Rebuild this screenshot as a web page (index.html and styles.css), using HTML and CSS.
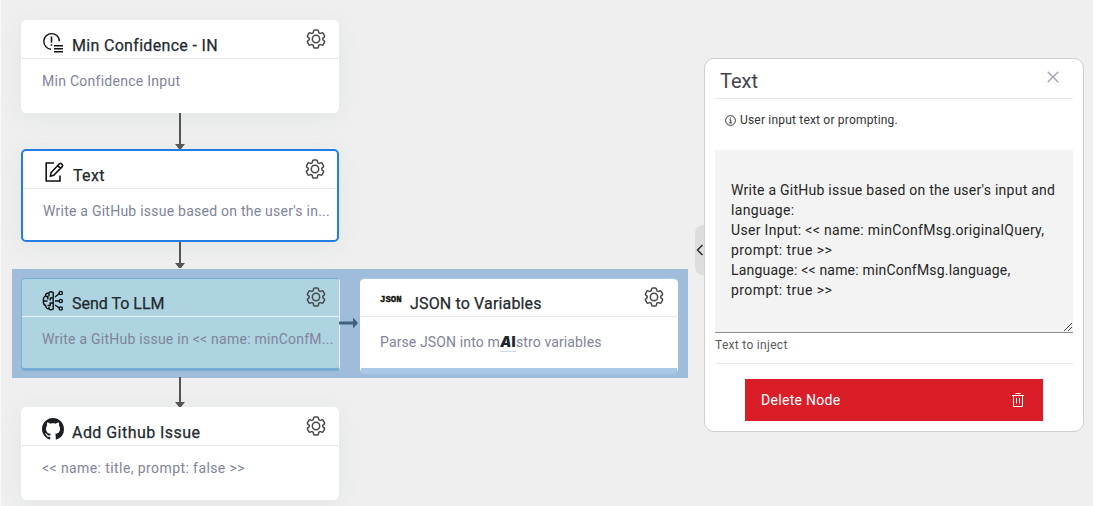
FILE: index.html
```html
<!DOCTYPE html>
<html lang="en">
<head>
<meta charset="utf-8">
<title>Flow editor</title>
<link rel="stylesheet" href="styles.css">
</head>
<body>
<svg class="defs" aria-hidden="true">
  <symbol id="gear" viewBox="0 0 24 24"><g fill="none" stroke="currentColor" stroke-width="1.5" stroke-linejoin="round"><path d="M9.594 3.94c.09-.542.56-.94 1.11-.94h2.593c.55 0 1.02.398 1.11.94l.213 1.281c.063.374.313.686.645.87.074.04.147.083.22.127.325.196.72.257 1.075.124l1.217-.456a1.125 1.125 0 0 1 1.37.49l1.296 2.247a1.125 1.125 0 0 1-.26 1.431l-1.003.827c-.293.241-.438.613-.43.992a7.723 7.723 0 0 1 0 .255c-.008.378.137.75.43.991l1.004.827c.424.35.534.955.26 1.43l-1.298 2.247a1.125 1.125 0 0 1-1.369.491l-1.217-.456c-.355-.133-.75-.072-1.076.124a6.47 6.47 0 0 1-.22.128c-.331.183-.581.495-.644.869l-.213 1.281c-.09.543-.56.94-1.11.94h-2.594c-.55 0-1.019-.398-1.11-.94l-.213-1.281c-.062-.374-.312-.686-.644-.87a6.52 6.52 0 0 1-.22-.127c-.325-.196-.72-.257-1.076-.124l-1.217.456a1.125 1.125 0 0 1-1.369-.49l-1.297-2.247a1.125 1.125 0 0 1 .26-1.431l1.004-.827c.292-.24.437-.613.43-.991a6.932 6.932 0 0 1 0-.255c.007-.38-.138-.751-.43-.992l-1.004-.827a1.125 1.125 0 0 1-.26-1.43l1.297-2.247a1.125 1.125 0 0 1 1.37-.491l1.216.456c.356.133.751.072 1.076-.124.072-.044.146-.086.22-.128.332-.183.582-.495.644-.869l.214-1.28Z"/><circle cx="12" cy="12" r="3.7"/></g></symbol>
</svg>
<main class="canvas">
  <section class="branch"></section>

  <article class="node node-confidence">
    <header class="node-head">
      <svg class="icon" viewBox="0 0 22 22"><g fill="none" stroke="#111" stroke-width="1.4"><path d="M9 17.2A7.8 7.8 0 1 1 17.4 9.2"/><path d="M9.5 4.6v6.2M9.5 12.2v1.5" stroke-width="1.6"/><path d="M12 13.7h9M12 16.7h9M12 19.7h9" stroke-width="1.5"/></g></svg>
      <h2 class="node-title">Min Confidence - IN</h2>
      <svg class="gear"><use href="#gear"/></svg>
    </header>
    <p class="node-text">Min Confidence Input</p>
  </article>

  <article class="node node-selected">
    <header class="node-head">
      <svg class="icon icon-edit" viewBox="0 0 22 22"><g fill="none" stroke="#111" stroke-width="1.6"><path d="M11 2H3.2v18H17V14.5"/><path d="M8 11.8 16.4 2.8q1-1 2 0l.8.8q1 1 0 2L10.7 14.4 7.4 15.2ZM14.7 4.6l2.8 2.8"/></g></svg>
      <h2 class="node-title">Text</h2>
      <svg class="gear"><use href="#gear"/></svg>
    </header>
    <p class="node-text">Write a GitHub issue based on the user's in...</p>
  </article>

  <article class="node node-llm">
    <header class="node-head">
      <svg class="icon" viewBox="0 0 22 22"><g fill="none" stroke="#0b0f12" stroke-width="1.4"><path d="M11.2 2.5Q8 .8 6.8 3 3.500 3 3.400 6 .8 7.500 1.500 10.800.8 14.200 3.500 15.500 4 18.800 7 18.800 8.400 20.700 11.200 19Z"/><path d="M7 3.200v3M3.600 6.500h2.200v3M1.800 11h3.700M11 8H8.300v2.400M11 13H8.200v2.500H5.600M7 18.600v-1.700M13 11h4.200M13 7l4.400-3.500M13 15l4.400 3"/><circle cx="18.800" cy="3" r="1.600"/><circle cx="18.800" cy="11" r="1.600"/><circle cx="18.800" cy="18.500" r="1.600"/></g></svg>
      <h2 class="node-title">Send To LLM</h2>
      <svg class="gear"><use href="#gear"/></svg>
    </header>
    <p class="node-text">Write a GitHub issue in &lt;&lt; name: minConfM...</p>
  </article>

  <article class="node node-json">
    <header class="node-head">
      <span class="json-mark">JSON</span>
      <h2 class="node-title">JSON to Variables</h2>
      <svg class="gear"><use href="#gear"/></svg>
    </header>
    <p class="node-text">Parse JSON into m<b class="ai"><i>A</i>I</b>stro variables</p>
  </article>

  <article class="node node-github">
    <header class="node-head">
      <svg class="icon icon-github" viewBox="0 0 16 16"><path fill="#1b1f23" d="M8 0C3.58 0 0 3.58 0 8c0 3.54 2.29 6.53 5.47 7.59.4.07.55-.17.55-.38 0-.19-.01-.82-.01-1.49-2.01.37-2.53-.49-2.69-.94-.09-.23-.48-.94-.82-1.13-.28-.15-.68-.52-.01-.53.63-.01 1.08.58 1.23.82.72 1.21 1.87.87 2.33.66.07-.52.28-.87.51-1.07-1.78-.2-3.64-.89-3.64-3.95 0-.87.31-1.59.82-2.15-.08-.2-.36-1.02.08-2.12 0 0 .67-.21 2.2.82.64-.18 1.32-.27 2-.27s1.36.09 2 .27c1.53-1.04 2.2-.82 2.2-.82.44 1.1.16 1.92.08 2.12.51.56.82 1.27.82 2.15 0 3.07-1.87 3.75-3.65 3.95.29.25.54.73.54 1.48 0 1.07-.01 1.93-.01 2.2 0 .21.15.46.55.38A8.01 8.01 0 0 0 16 8c0-4.42-3.58-8-8-8Z"/></svg>
      <h2 class="node-title">Add Github Issue</h2>
      <svg class="gear"><use href="#gear"/></svg>
    </header>
    <p class="node-text">&lt;&lt; name: title, prompt: false &gt;&gt;</p>
  </article>

  <svg class="edges" viewBox="0 0 700 506">
    <path fill="#555" d="M179 113h2v31h4l-4 5h-2l-4-5h4ZM179 242h2v21h4l-4 5h-2l-4-5h4ZM179 377h2v25h4l-4 5h-2l-4-5h4Z"/>
    <path fill="#3f607f" d="M339 321.5h14v-4l5 5.500-5 5.500v-4h-14Z"/>
  </svg>

  <button class="collapse" aria-label="Collapse"><svg viewBox="0 0 10 12"><path d="M7.500 1 2.500 6l5 5" fill="none" stroke="#222" stroke-width="1.400"/></svg></button>

  <aside class="panel">
    <header class="panel-head">
      <h1 class="panel-title">Text</h1>
      <svg class="close" viewBox="0 0 12 12"><path d="M.7.7l10.600 10.600M11.300.7.7 11.300" stroke="#a3a5b3" stroke-width="1.400"/></svg>
    </header>
    <p class="hint"><svg class="info" viewBox="0 0 12 12"><g fill="none" stroke="#222"><circle cx="6" cy="6" r="5.300"/><path d="M4.800 5.300h1.500v3M4.500 8.500h3.200M5.500 3.300h1.200"/></g></svg>User input text or prompting.</p>
    <div class="field">
      <p class="line-first">Write a GitHub issue based on the user's input and</p>
      <p>language:</p>
      <p>User Input: &lt;&lt; name: minConfMsg.originalQuery,</p>
      <p class="line-prompt">prompt: true &gt;&gt;</p>
      <p class="line-language">Language: &lt;&lt; name: minConfMsg.language,</p>
      <p class="line-prompt">prompt: true &gt;&gt;</p>
      <svg class="grip" viewBox="0 0 10 10"><path d="M1 9 9 1M5 9 9 5" stroke="#444" stroke-width="1" fill="none"/></svg>
    </div>
    <p class="caption">Text to inject</p>
    <button class="delete">Delete Node
      <svg class="trash" viewBox="0 0 14 16"><path d="M1 3.500h12M4.500 1.500h5M2.500 3.500v11h9v-11M5.500 6v5.500M8.500 6v5.500" fill="none" stroke="#fff" stroke-width="1"/></svg>
    </button>
  </aside>
</main>
</body>
</html>
```
FILE: styles.css
```css
* { box-sizing: border-box; margin: 0; padding: 0; }
body { background: #efefef; font-family: Roboto, "Liberation Sans", sans-serif; overflow: hidden; }
.defs { position: absolute; width: 0; height: 0; }
.canvas { position: relative; width: 1093px; height: 506px; overflow: hidden; border-left: 1px solid #fafafa; }
.branch { position: absolute; left: 11px; top: 269px; width: 676px; height: 109px; background: #9fbdda; }
.node {
  position: absolute; left: 20px; width: 318px; height: 93px;
  display: flex; flex-direction: column;
  background: #fff; border: 1px solid #fff; border-radius: 5px;
  box-shadow: 0 4px 20px rgba(200, 210, 210, .32);
}
.node-confidence { top: 20px; }
.node-selected { top: 149px; border: 2px solid #247de1; }
.node-llm { top: 278px; width: 319px; background: #add4e0; border-color: #76acd3 #e8eef3 #76acd3 #79afd3; border-bottom-width: 3px; border-radius: 4px; box-shadow: none; }
.node-json { left: 359px; top: 278px; height: 96px; border-color: #a9cae7 #fff; border-bottom-width: 6px; box-shadow: none; }
.node-github { top: 407px; }
.node-head { display: flex; flex: none; height: 38px; padding: 0 12px 0 20px; border-bottom: 1px solid #e6e7ee; }
.node-llm .node-head { border-color: #e9f2f6; padding-right: 13px; }
.icon { flex: none; width: 22px; height: 22px; margin-top: 11px; }
.node-selected .icon { margin-top: 10px; }
.icon-github { margin-top: 10px; }
.node-title { flex: 1; margin: 14px 0 0 8px; font-size: 16px; line-height: 22px; font-weight: 400; -webkit-text-stroke: .25px #24292e; letter-spacing: .32px; color: #24292e; white-space: nowrap; }
.node-llm .node-title { letter-spacing: 0; }
.node-json .node-title { margin-left: 8px; letter-spacing: .15px; }
.node-github .node-title { letter-spacing: .45px; }
.gear { flex: none; width: 24px; height: 24px; margin: 6px -2px 0 0; color: #484848; }
.node-llm .gear, .node-json .gear { margin-top: 6px; }
.node-json .gear { margin-right: -1px; }
.node-text { padding: 12px 0 0 20px; font-size: 14px; line-height: 20px; letter-spacing: .27px; color: #80849a; white-space: nowrap; }
.node-selected .node-text { letter-spacing: .24px; }
.node-llm .node-text { letter-spacing: .25px; }
.node-json .node-text { padding: 15px 0 0 19px; letter-spacing: .13px; }
.node-github .node-text { letter-spacing: .41px; }
.json-mark { width: 22px; margin: 15px 0 0 -1px; font: 700 9px/12px "Liberation Mono", monospace; color: #111; -webkit-text-stroke: .4px #111; }
.ai { display: inline-flex; justify-content: center; width: 16px; height: 20px; font: 900 14px/19px Inter, sans-serif; letter-spacing: 0; color: #20242b; border-bottom: 1px solid #cfdbea; }
.edges { position: absolute; left: -1px; top: 0; width: 700px; height: 506px; }
.collapse { position: absolute; left: 694px; top: 225px; width: 12px; height: 50px; background: #ddd; border: 0; border-radius: 8px 0 0 8px; }
.collapse svg { display: block; width: 10px; height: 12px; }
.panel {
  position: absolute; left: 703px; top: 58px; width: 380px; height: 374px;
  display: flex; flex-direction: column; padding: 0 10px;
  background: #fff; border: 1px solid #cfcfcf; border-radius: 10px;
}
.panel-head { display: flex; justify-content: space-between; height: 40px; padding: 8px 14px 0 5px; border-bottom: 1px solid #e3e4ee; }
.panel-title { font-size: 20px; line-height: 28px; font-weight: 400; color: #44454f; }
.close { width: 12px; height: 12px; margin-top: 4px; }
.hint { display: flex; align-items: center; height: 16px; margin: 13px 0 22px 10px; gap: 4px; font-size: 12px; letter-spacing: .19px; color: #333; }
.info { width: 11px; height: 11px; }
.field { position: relative; height: 183px; padding: 30px 0 0 16px; background: #f3f3f3; border-bottom: 1px solid #8d8d8d; font-size: 14px; line-height: 20px; letter-spacing: .32px; color: #262626; white-space: nowrap; }
.line-first { letter-spacing: .25px; }
.line-prompt { letter-spacing: .44px; }
.line-language { letter-spacing: .19px; }
.grip { position: absolute; right: 0; bottom: 0; width: 10px; height: 10px; }
.caption { height: 31px; padding-top: 4px; border-bottom: 1px solid #e7e7e7; font-size: 12px; line-height: 16px; letter-spacing: .3px; color: #5a5a5a; }
.delete { display: flex; align-items: center; justify-content: space-between; width: 298px; height: 42px; margin: 15px 0 0 30px; padding: 0 18px 0 16px; border: 0; background: #da1e28; color: #fff; font: 400 14px/20px Roboto, sans-serif; letter-spacing: .3px; }
.trash { width: 14px; height: 16px; }
```
